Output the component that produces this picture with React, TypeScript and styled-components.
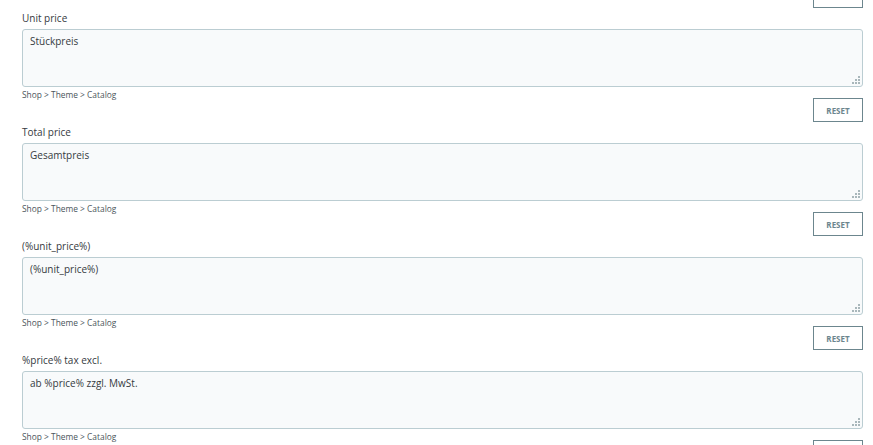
import React from "react";
import styled, { createGlobalStyle } from "styled-components";

const Global = createGlobalStyle`
  html, body { margin: 0; padding: 0; background: #ffffff; }
  body { font-family: "Open Sans", "Noto Sans", sans-serif; color: #363a41; overflow: hidden; }
  * { box-sizing: border-box; }
`;

const Page = styled.div`
  padding: 0 10px 0 22px;
  display: flex;
  flex-direction: column;
`;

const Field = styled.div`
  display: flex;
  flex-direction: column;
`;

const Label = styled.label`
  display: block;
  font-size: 10px;
  line-height: 14px;
  margin: 2.5px 0 4.5px;
  color: #363a41;
`;

const AreaWrap = styled.div`
  position: relative;
`;

const Area = styled.textarea`
  display: block;
  width: 100%;
  height: 58px;
  margin: 0;
  padding: 4px 7px;
  border: 1px solid #bbcdd2;
  border-radius: 3px;
  background: #f8fafb;
  font-family: "Open Sans", "Noto Sans", sans-serif;
  font-size: 10px;
  line-height: 14px;
  color: #363a41;
  resize: none;
  outline: none;
`;

const Grip = styled.svg`
  position: absolute;
  right: 3px;
  bottom: 3px;
  width: 8px;
  height: 8px;
  pointer-events: none;
`;

const Crumb = styled.div`
  font-size: 8.4px;
  line-height: 8px;
  margin-top: 4px;
  color: #4b555b;
  white-space: nowrap;
`;

const ButtonRow = styled.div<{ $top?: number }>`
  display: flex;
  justify-content: flex-end;
  margin-top: ${(p) => (p.$top !== undefined ? p.$top : -1)}px;
`;

const ResetButton = styled.button`
  width: 50px;
  height: 24px;
  padding: 0;
  border: 1px solid #6c868e;
  border-radius: 0;
  background: #ffffff;
  color: #6c868e;
  font-family: "Open Sans", "Noto Sans", sans-serif;
  font-size: 8px;
  font-weight: 700;
  text-transform: uppercase;
  cursor: pointer;
`;

const fields = [
  { label: "Unit price", value: "Stückpreis" },
  { label: "Total price", value: "Gesamtpreis" },
  { label: "(%unit_price%)", value: "(%unit_price%)" },
  { label: "%price% tax excl.", value: "ab %price% zzgl. MwSt." },
];

function ResizeGrip() {
  const dots = [
    [6, 0],
    [3, 3],
    [6, 3],
    [0, 6],
    [3, 6],
    [6, 6],
  ];
  return (
    <Grip viewBox="0 0 8 8">
      {dots.map(([x, y], i) => (
        <rect key={i} x={x} y={y} width={2} height={2} fill="#a9b7bb" />
      ))}
    </Grip>
  );
}

export default function App() {
  return (
    <>
      <Global />
      <Page>
        <ButtonRow $top={-16}>
          <ResetButton type="button">Reset</ResetButton>
        </ButtonRow>
        {fields.map((f) => (
          <Field key={f.label}>
            <Label>{f.label}</Label>
            <AreaWrap>
              <Area defaultValue={f.value} />
              <ResizeGrip />
            </AreaWrap>
            <Crumb>Shop &gt; Theme &gt; Catalog</Crumb>
            <ButtonRow>
              <ResetButton type="button">Reset</ResetButton>
            </ButtonRow>
          </Field>
        ))}
      </Page>
    </>
  );
}
